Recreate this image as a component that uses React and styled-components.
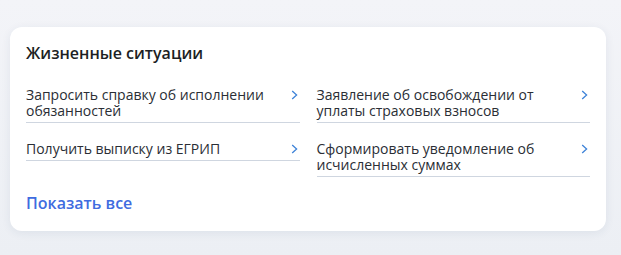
import styled, { createGlobalStyle } from "styled-components";

const Global = createGlobalStyle`
  html, body {
    margin: 0;
    padding: 0;
    background: #eef0f5;
    font-family: "Open Sans", "Noto Sans", sans-serif;
  }
`;

const Page = styled.div`
  width: 621px;
  height: 255px;
  padding: 27px 0 0 10px;
  box-sizing: border-box;
  background: linear-gradient(180deg, #f3f4f8 0%, #eceff4 100%);
`;

const Card = styled.section`
  width: 596px;
  box-sizing: border-box;
  background: #fff;
  border-radius: 12px;
  padding: 16px 16px 17px;
  box-shadow: 0 2px 10px rgba(40, 60, 100, 0.08);
`;

const Title = styled.h2`
  margin: 0;
  font-size: 16px;
  line-height: 20px;
  font-weight: 600;
  color: #1c1f24;
`;

const Grid = styled.div`
  display: grid;
  grid-template-columns: 1fr 1fr;
  column-gap: 17px;
  row-gap: 18px;
  align-items: start;
  margin-top: 24px;
`;

const Item = styled.a`
  display: flex;
  align-items: flex-start;
  justify-content: space-between;
  gap: 12px;
  padding-bottom: 3px;
  border-bottom: 1px solid #cfd6e0;
  color: #2a2e35;
  text-decoration: none;
  font-size: 14px;
  line-height: 16px;
  cursor: pointer;
`;

const Label = styled.span`
  max-width: 250px;
`;

const Chevron = styled.svg`
  flex: none;
  margin-top: 3px;
  margin-right: 2px;
`;

const ShowAll = styled.a`
  display: inline-block;
  margin-top: 18px;
  font-size: 16px;
  line-height: 16px;
  font-weight: 600;
  color: #3f6ce0;
  text-decoration: none;
`;

const items = [
  "Запросить справку об исполнении обязанностей",
  "Заявление об освобождении от уплаты страховых взносов",
  "Получить выписку из ЕГРИП",
  "Сформировать уведомление об исчисленных суммах",
];

export default function App() {
  return (
    <>
      <Global />
      <Page>
        <Card>
          <Title>Жизненные ситуации</Title>
          <Grid>
            {items.map((t) => (
              <Item key={t}>
                <Label>{t}</Label>
                <Chevron width="7" height="10" viewBox="0 0 7 10">
                  <path d="M1.2 1 L5.6 5 L1.2 9" fill="none" stroke="#3d82d8" strokeWidth="1.3" />
                </Chevron>
              </Item>
            ))}
          </Grid>
          <ShowAll>Показать все</ShowAll>
        </Card>
      </Page>
    </>
  );
}
